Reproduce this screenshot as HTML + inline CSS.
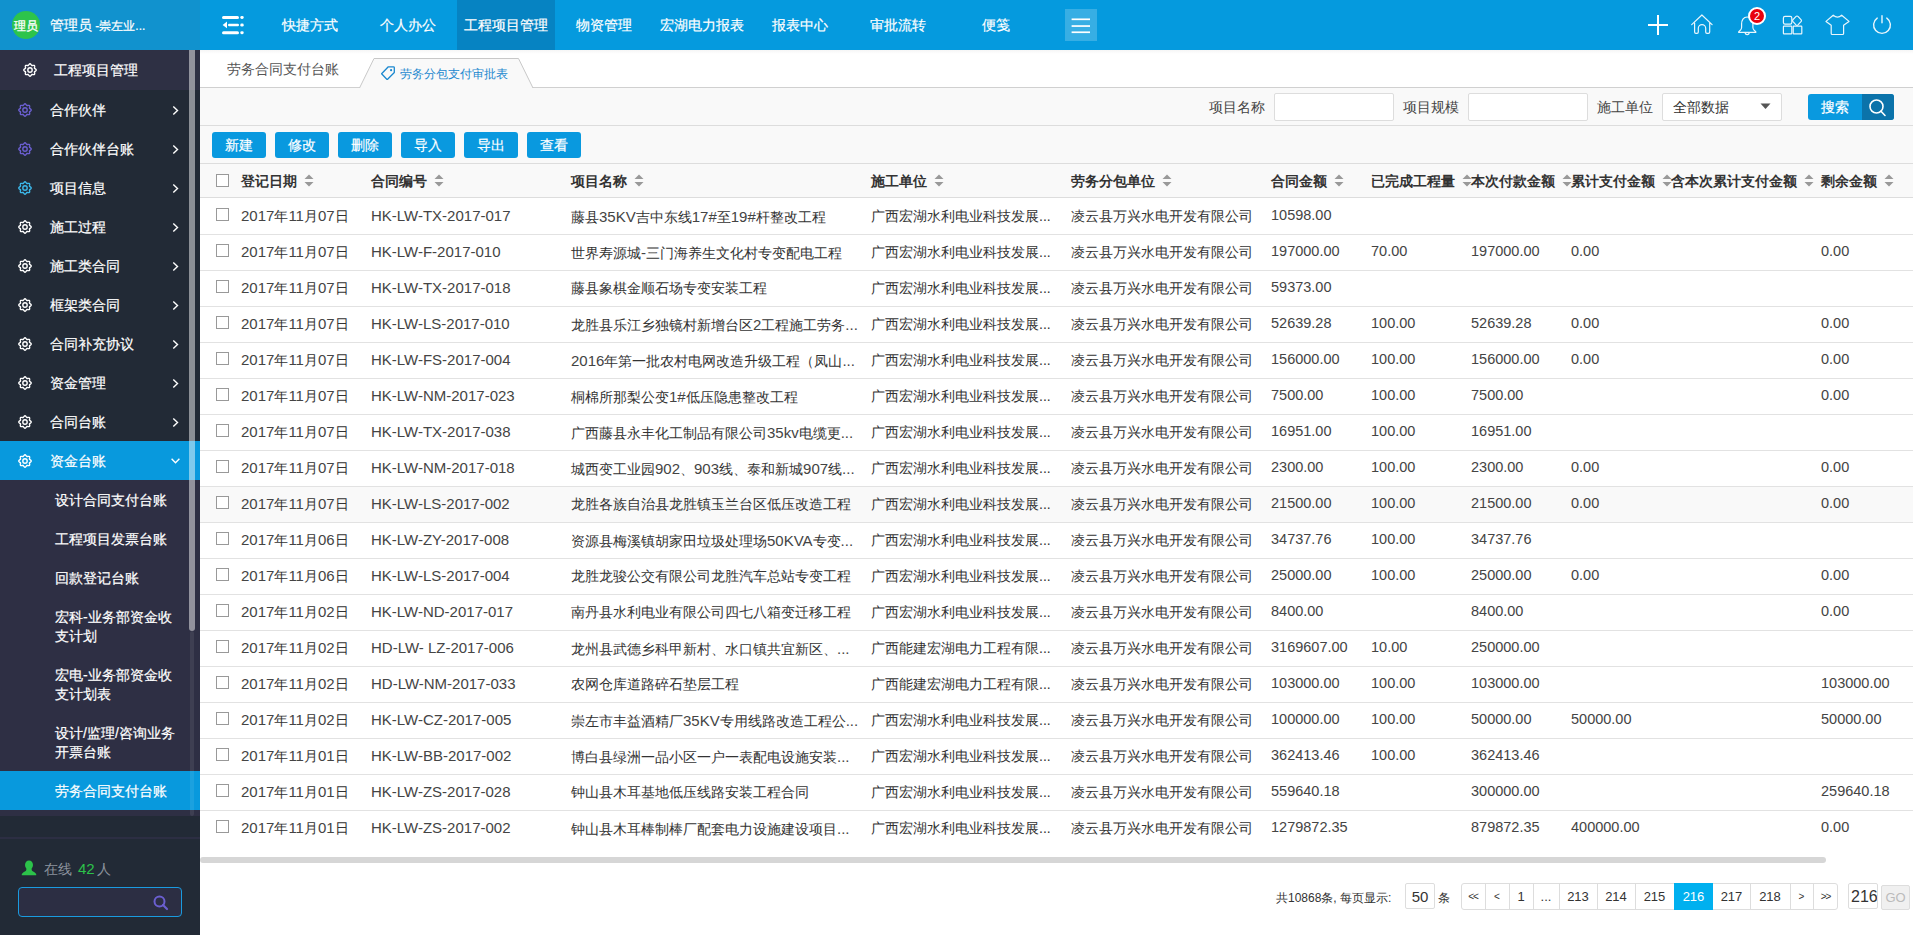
<!DOCTYPE html><html><head><meta charset="utf-8"><style>
.nav,.mi,.sub,.btn,.ws{-webkit-text-stroke:0.2px #fff}
*{box-sizing:border-box}
html,body{margin:0;padding:0}
body{width:1913px;height:935px;overflow:hidden;position:relative;font-family:"Liberation Sans",sans-serif;font-size:14px;color:#333;background:#fff}
.abs{position:absolute}
#hl{left:0;top:0;width:200px;height:50px;background:#1192ce}
#hn{left:200px;top:0;width:1713px;height:50px;background:#059ade}
.nav{position:absolute;top:0;height:50px;width:98px;line-height:50px;text-align:center;color:#fff;font-size:14px}
.nav.on{background:#0683c2}
#side{left:0;top:50px;width:200px;height:885px;background:#222a36}
.mi{position:absolute;left:0;width:200px;height:39px;line-height:39px;color:#fff;font-size:14px}
.mi .t{position:absolute;left:50px;top:1px}
.gear{position:absolute}
.chev{position:absolute;left:171px;top:16px;width:9px;height:9px}
.sub{position:absolute;left:0;width:200px;color:#fff;font-size:14px;line-height:19px}
.sub .t{position:absolute;left:55px}
.tr{position:absolute;left:200px;width:1713px;height:36px;border-bottom:1px solid #e2e2e2;background:#fff}
.c{position:absolute;top:0;line-height:33px;white-space:nowrap;color:#333}
.cb{position:absolute;left:16px;width:13px;height:13px;border:1px solid #999;background:#fff}
.l{font-size:15px;color:#444}
.n{font-size:14.5px;color:#444}
.btn{position:absolute;top:132px;width:54px;height:26px;border-radius:3px;background:#0999df;color:#fff;text-align:center;line-height:26px;font-size:14px}
.h{position:absolute;top:1px;line-height:34px;white-space:nowrap;font-weight:bold;color:#333}
.sort{display:inline-block;vertical-align:middle;margin-left:7px;width:10px;height:14px;position:relative;top:-1px}
.pgt{position:absolute;top:884px;height:25px;text-align:center;line-height:25px;font-size:13px;color:#333;white-space:nowrap}
</style></head><body>
<div id="hl" class="abs"></div>
<div class="abs" style="left:12px;top:11px;width:28px;height:28px;border-radius:50%;background:#2dc44b;color:#fff;font-size:12px;line-height:30px;text-align:center;letter-spacing:0;-webkit-text-stroke:0.3px #fff">理员</div>
<div class="abs ws" style="left:50px;top:0;line-height:50px;color:#fff;font-size:14px;white-space:nowrap">管理员<span style="font-size:12px"> -崇左业...</span></div>
<div id="hn" class="abs"></div>
<svg class="abs" style="left:221px;top:15px" width="24" height="20" viewBox="0 0 24 20"><rect x="1" y="1" width="17" height="3" rx="1.5" fill="#fff"/><rect x="19.3" y="1" width="3.4" height="3" rx="1.4" fill="#fff"/><path d="M1.6,9.9 L6,6.5 L6,13.3 Z" fill="#fff"/><rect x="7" y="8.8" width="11" height="2.5" rx="1.2" fill="#fff"/><rect x="19.3" y="8.6" width="3.4" height="3" rx="1.4" fill="#fff"/><rect x="1" y="16.2" width="17" height="3" rx="1.5" fill="#fff"/><rect x="19.3" y="16.2" width="3.4" height="3" rx="1.4" fill="#fff"/></svg>
<div class="nav" style="left:261px">快捷方式</div>
<div class="nav" style="left:359px">个人办公</div>
<div class="nav on" style="left:457px">工程项目管理</div>
<div class="nav" style="left:555px">物资管理</div>
<div class="nav" style="left:653px">宏湖电力报表</div>
<div class="nav" style="left:751px">报表中心</div>
<div class="nav" style="left:849px">审批流转</div>
<div class="nav" style="left:947px">便笺</div>
<div class="abs" style="left:1065px;top:9px;width:32px;height:32px;background:rgba(255,255,255,0.2)"></div>
<svg class="abs" style="left:1065px;top:9px" width="32" height="32"><rect x="6.6" y="9.45" width="18.4" height="1.7" fill="#fff"/><rect x="6.6" y="16.2" width="18.4" height="1.7" fill="#fff"/><rect x="6.6" y="22.4" width="18.4" height="1.7" fill="#fff"/></svg>
<svg class="abs" style="left:1646px;top:13px" width="24" height="24"><path d="M12,2 V22 M2,12 H22" stroke="#fff" stroke-width="2"/></svg>
<svg class="abs" style="left:1690px;top:13px" width="24" height="24"><path d="M1.7,11.6 L11.9,2 L22.1,11.6 M4.6,10 V19 Q4.6,20.4 6,20.4 H7 Q8.3,20.4 8.3,19 V15.3 A3.7,3.7 0 0 1 15.7,15.3 V19 Q15.7,20.4 17,20.4 H18.3 Q19.7,20.4 19.7,19 V10" fill="none" stroke="#eaf6fc" stroke-width="1.2" stroke-linejoin="round" stroke-linecap="round"/></svg>
<svg class="abs" style="left:1736px;top:13px" width="24" height="26"><path d="M11.2,4 C7.3,4 5.6,7.5 5.6,11 V14.6 Q5.6,16 4.3,17.3 L2.8,18.6 Q2.2,19.4 3.2,19.4 H19.3 Q20.3,19.4 19.7,18.6 L18.2,17.3 Q16.9,16 16.9,14.6 V11 C16.9,7.5 15.1,4 11.2,4 Z M9.2,19.6 A2,2 0 0 0 13.2,19.6" fill="none" stroke="#eaf6fc" stroke-width="1.2" stroke-linejoin="round" stroke-linecap="round"/></svg>
<div class="abs" style="left:1748px;top:7px;width:18px;height:18px;border-radius:50%;background:#e8000f;border:2px solid #fff;color:#fff;font-size:11px;line-height:14px;text-align:center">2</div>
<svg class="abs" style="left:1781px;top:13px" width="24" height="24"><rect x="2.4" y="3.4" width="8.4" height="7.8" rx="1.6" fill="none" stroke="#eaf6fc" stroke-width="1.2" stroke-linejoin="round" stroke-linecap="round"/><path d="M16,3 Q16.6,3 17.2,3.6 L20.2,6.8 Q20.8,7.6 20.2,8.4 L17,11.8 Q16,12.8 15,11.8 L11.8,8.4 Q11.2,7.6 11.8,6.8 L14.8,3.6 Q15.4,3 16,3 Z" fill="none" stroke="#eaf6fc" stroke-width="1.2" stroke-linejoin="round" stroke-linecap="round"/><rect x="2.4" y="13.2" width="8.4" height="7.6" rx="0.6" fill="none" stroke="#eaf6fc" stroke-width="1.2" stroke-linejoin="round" stroke-linecap="round"/><rect x="12.2" y="13.2" width="8.6" height="7.6" rx="0.6" fill="none" stroke="#eaf6fc" stroke-width="1.2" stroke-linejoin="round" stroke-linecap="round"/></svg>
<svg class="abs" style="left:1825px;top:13px" width="26" height="24"><path d="M8.2,2.2 Q12.5,6 16.7,2.2 L24,8.4 L18.6,12.2 V20.5 Q18.6,21.5 17.6,21.5 H7.2 Q6.2,21.5 6.2,20.5 V12.2 L1,8.4 Z" fill="none" stroke="#eaf6fc" stroke-width="1.2" stroke-linejoin="round" stroke-linecap="round"/></svg>
<svg class="abs" style="left:1870px;top:13px" width="24" height="24"><path d="M7.2,5.1 A8.4,8.4 0 1 0 16.8,5.1 M12,2.8 V9.8" fill="none" stroke="#eaf6fc" stroke-width="1.4" stroke-linecap="round"/></svg>
<div id="side" class="abs"></div>
<div class="abs" style="left:0;top:50px;width:200px;height:40px;background:#2e3044"></div>
<svg class="gear" style="left:22px;top:62px" width="16" height="16" viewBox="0 0 16 16"><path d="M8.00,1.80 L8.40,1.90 L8.77,2.18 L9.08,2.56 L9.35,2.95 L9.60,3.28 L9.88,3.47 L10.21,3.53 L10.61,3.48 L11.08,3.39 L11.58,3.34 L12.03,3.40 L12.38,3.62 L12.60,3.97 L12.66,4.42 L12.61,4.92 L12.52,5.39 L12.47,5.79 L12.53,6.12 L12.72,6.40 L13.05,6.65 L13.44,6.92 L13.82,7.23 L14.10,7.60 L14.20,8.00 L14.10,8.40 L13.82,8.77 L13.44,9.08 L13.05,9.35 L12.72,9.60 L12.53,9.88 L12.47,10.21 L12.52,10.61 L12.61,11.08 L12.66,11.58 L12.60,12.03 L12.38,12.38 L12.03,12.60 L11.58,12.66 L11.08,12.61 L10.61,12.52 L10.21,12.47 L9.88,12.53 L9.60,12.72 L9.35,13.05 L9.08,13.44 L8.77,13.82 L8.40,14.10 L8.00,14.20 L7.60,14.10 L7.23,13.82 L6.92,13.44 L6.65,13.05 L6.40,12.72 L6.12,12.53 L5.79,12.47 L5.39,12.52 L4.92,12.61 L4.42,12.66 L3.97,12.60 L3.62,12.38 L3.40,12.03 L3.34,11.58 L3.39,11.08 L3.48,10.61 L3.53,10.21 L3.47,9.88 L3.28,9.60 L2.95,9.35 L2.56,9.08 L2.18,8.77 L1.90,8.40 L1.80,8.00 L1.90,7.60 L2.18,7.23 L2.56,6.92 L2.95,6.65 L3.28,6.40 L3.47,6.12 L3.53,5.79 L3.48,5.39 L3.39,4.92 L3.34,4.42 L3.40,3.97 L3.62,3.62 L3.97,3.40 L4.42,3.34 L4.92,3.39 L5.39,3.48 L5.79,3.53 L6.12,3.47 L6.40,3.28 L6.65,2.95 L6.92,2.56 L7.23,2.18 L7.60,1.90Z" fill="none" stroke="#fff" stroke-width="1.4"/><circle cx="8" cy="8" r="2.2" fill="none" stroke="#fff" stroke-width="1.4"/></svg>
<div class="abs ws" style="left:54px;top:50px;line-height:40px;color:#fff;font-size:14px">工程项目管理</div>
<div class="mi" style="top:90px"><svg class="gear" style="left:17px;top:12px" width="16" height="16" viewBox="0 0 16 16"><path d="M8.00,1.80 L8.40,1.90 L8.77,2.18 L9.08,2.56 L9.35,2.95 L9.60,3.28 L9.88,3.47 L10.21,3.53 L10.61,3.48 L11.08,3.39 L11.58,3.34 L12.03,3.40 L12.38,3.62 L12.60,3.97 L12.66,4.42 L12.61,4.92 L12.52,5.39 L12.47,5.79 L12.53,6.12 L12.72,6.40 L13.05,6.65 L13.44,6.92 L13.82,7.23 L14.10,7.60 L14.20,8.00 L14.10,8.40 L13.82,8.77 L13.44,9.08 L13.05,9.35 L12.72,9.60 L12.53,9.88 L12.47,10.21 L12.52,10.61 L12.61,11.08 L12.66,11.58 L12.60,12.03 L12.38,12.38 L12.03,12.60 L11.58,12.66 L11.08,12.61 L10.61,12.52 L10.21,12.47 L9.88,12.53 L9.60,12.72 L9.35,13.05 L9.08,13.44 L8.77,13.82 L8.40,14.10 L8.00,14.20 L7.60,14.10 L7.23,13.82 L6.92,13.44 L6.65,13.05 L6.40,12.72 L6.12,12.53 L5.79,12.47 L5.39,12.52 L4.92,12.61 L4.42,12.66 L3.97,12.60 L3.62,12.38 L3.40,12.03 L3.34,11.58 L3.39,11.08 L3.48,10.61 L3.53,10.21 L3.47,9.88 L3.28,9.60 L2.95,9.35 L2.56,9.08 L2.18,8.77 L1.90,8.40 L1.80,8.00 L1.90,7.60 L2.18,7.23 L2.56,6.92 L2.95,6.65 L3.28,6.40 L3.47,6.12 L3.53,5.79 L3.48,5.39 L3.39,4.92 L3.34,4.42 L3.40,3.97 L3.62,3.62 L3.97,3.40 L4.42,3.34 L4.92,3.39 L5.39,3.48 L5.79,3.53 L6.12,3.47 L6.40,3.28 L6.65,2.95 L6.92,2.56 L7.23,2.18 L7.60,1.90Z" fill="none" stroke="#6b5fd0" stroke-width="1.4"/><circle cx="8" cy="8" r="2.2" fill="none" stroke="#6b5fd0" stroke-width="1.4"/></svg><span class="t">合作伙伴</span><svg class="chev" viewBox="0 0 9 9"><path d="M2.3,0.6 L6.5,4.5 L2.3,8.4" fill="none" stroke="#fff" stroke-width="1.4"/></svg></div>
<div class="mi" style="top:129px"><svg class="gear" style="left:17px;top:12px" width="16" height="16" viewBox="0 0 16 16"><path d="M8.00,1.80 L8.40,1.90 L8.77,2.18 L9.08,2.56 L9.35,2.95 L9.60,3.28 L9.88,3.47 L10.21,3.53 L10.61,3.48 L11.08,3.39 L11.58,3.34 L12.03,3.40 L12.38,3.62 L12.60,3.97 L12.66,4.42 L12.61,4.92 L12.52,5.39 L12.47,5.79 L12.53,6.12 L12.72,6.40 L13.05,6.65 L13.44,6.92 L13.82,7.23 L14.10,7.60 L14.20,8.00 L14.10,8.40 L13.82,8.77 L13.44,9.08 L13.05,9.35 L12.72,9.60 L12.53,9.88 L12.47,10.21 L12.52,10.61 L12.61,11.08 L12.66,11.58 L12.60,12.03 L12.38,12.38 L12.03,12.60 L11.58,12.66 L11.08,12.61 L10.61,12.52 L10.21,12.47 L9.88,12.53 L9.60,12.72 L9.35,13.05 L9.08,13.44 L8.77,13.82 L8.40,14.10 L8.00,14.20 L7.60,14.10 L7.23,13.82 L6.92,13.44 L6.65,13.05 L6.40,12.72 L6.12,12.53 L5.79,12.47 L5.39,12.52 L4.92,12.61 L4.42,12.66 L3.97,12.60 L3.62,12.38 L3.40,12.03 L3.34,11.58 L3.39,11.08 L3.48,10.61 L3.53,10.21 L3.47,9.88 L3.28,9.60 L2.95,9.35 L2.56,9.08 L2.18,8.77 L1.90,8.40 L1.80,8.00 L1.90,7.60 L2.18,7.23 L2.56,6.92 L2.95,6.65 L3.28,6.40 L3.47,6.12 L3.53,5.79 L3.48,5.39 L3.39,4.92 L3.34,4.42 L3.40,3.97 L3.62,3.62 L3.97,3.40 L4.42,3.34 L4.92,3.39 L5.39,3.48 L5.79,3.53 L6.12,3.47 L6.40,3.28 L6.65,2.95 L6.92,2.56 L7.23,2.18 L7.60,1.90Z" fill="none" stroke="#6b5fd0" stroke-width="1.4"/><circle cx="8" cy="8" r="2.2" fill="none" stroke="#6b5fd0" stroke-width="1.4"/></svg><span class="t">合作伙伴台账</span><svg class="chev" viewBox="0 0 9 9"><path d="M2.3,0.6 L6.5,4.5 L2.3,8.4" fill="none" stroke="#fff" stroke-width="1.4"/></svg></div>
<div class="mi" style="top:168px"><svg class="gear" style="left:17px;top:12px" width="16" height="16" viewBox="0 0 16 16"><path d="M8.00,1.80 L8.40,1.90 L8.77,2.18 L9.08,2.56 L9.35,2.95 L9.60,3.28 L9.88,3.47 L10.21,3.53 L10.61,3.48 L11.08,3.39 L11.58,3.34 L12.03,3.40 L12.38,3.62 L12.60,3.97 L12.66,4.42 L12.61,4.92 L12.52,5.39 L12.47,5.79 L12.53,6.12 L12.72,6.40 L13.05,6.65 L13.44,6.92 L13.82,7.23 L14.10,7.60 L14.20,8.00 L14.10,8.40 L13.82,8.77 L13.44,9.08 L13.05,9.35 L12.72,9.60 L12.53,9.88 L12.47,10.21 L12.52,10.61 L12.61,11.08 L12.66,11.58 L12.60,12.03 L12.38,12.38 L12.03,12.60 L11.58,12.66 L11.08,12.61 L10.61,12.52 L10.21,12.47 L9.88,12.53 L9.60,12.72 L9.35,13.05 L9.08,13.44 L8.77,13.82 L8.40,14.10 L8.00,14.20 L7.60,14.10 L7.23,13.82 L6.92,13.44 L6.65,13.05 L6.40,12.72 L6.12,12.53 L5.79,12.47 L5.39,12.52 L4.92,12.61 L4.42,12.66 L3.97,12.60 L3.62,12.38 L3.40,12.03 L3.34,11.58 L3.39,11.08 L3.48,10.61 L3.53,10.21 L3.47,9.88 L3.28,9.60 L2.95,9.35 L2.56,9.08 L2.18,8.77 L1.90,8.40 L1.80,8.00 L1.90,7.60 L2.18,7.23 L2.56,6.92 L2.95,6.65 L3.28,6.40 L3.47,6.12 L3.53,5.79 L3.48,5.39 L3.39,4.92 L3.34,4.42 L3.40,3.97 L3.62,3.62 L3.97,3.40 L4.42,3.34 L4.92,3.39 L5.39,3.48 L5.79,3.53 L6.12,3.47 L6.40,3.28 L6.65,2.95 L6.92,2.56 L7.23,2.18 L7.60,1.90Z" fill="none" stroke="#3cb8ea" stroke-width="1.4"/><circle cx="8" cy="8" r="2.2" fill="none" stroke="#3cb8ea" stroke-width="1.4"/></svg><span class="t">项目信息</span><svg class="chev" viewBox="0 0 9 9"><path d="M2.3,0.6 L6.5,4.5 L2.3,8.4" fill="none" stroke="#fff" stroke-width="1.4"/></svg></div>
<div class="mi" style="top:207px"><svg class="gear" style="left:17px;top:12px" width="16" height="16" viewBox="0 0 16 16"><path d="M8.00,1.80 L8.40,1.90 L8.77,2.18 L9.08,2.56 L9.35,2.95 L9.60,3.28 L9.88,3.47 L10.21,3.53 L10.61,3.48 L11.08,3.39 L11.58,3.34 L12.03,3.40 L12.38,3.62 L12.60,3.97 L12.66,4.42 L12.61,4.92 L12.52,5.39 L12.47,5.79 L12.53,6.12 L12.72,6.40 L13.05,6.65 L13.44,6.92 L13.82,7.23 L14.10,7.60 L14.20,8.00 L14.10,8.40 L13.82,8.77 L13.44,9.08 L13.05,9.35 L12.72,9.60 L12.53,9.88 L12.47,10.21 L12.52,10.61 L12.61,11.08 L12.66,11.58 L12.60,12.03 L12.38,12.38 L12.03,12.60 L11.58,12.66 L11.08,12.61 L10.61,12.52 L10.21,12.47 L9.88,12.53 L9.60,12.72 L9.35,13.05 L9.08,13.44 L8.77,13.82 L8.40,14.10 L8.00,14.20 L7.60,14.10 L7.23,13.82 L6.92,13.44 L6.65,13.05 L6.40,12.72 L6.12,12.53 L5.79,12.47 L5.39,12.52 L4.92,12.61 L4.42,12.66 L3.97,12.60 L3.62,12.38 L3.40,12.03 L3.34,11.58 L3.39,11.08 L3.48,10.61 L3.53,10.21 L3.47,9.88 L3.28,9.60 L2.95,9.35 L2.56,9.08 L2.18,8.77 L1.90,8.40 L1.80,8.00 L1.90,7.60 L2.18,7.23 L2.56,6.92 L2.95,6.65 L3.28,6.40 L3.47,6.12 L3.53,5.79 L3.48,5.39 L3.39,4.92 L3.34,4.42 L3.40,3.97 L3.62,3.62 L3.97,3.40 L4.42,3.34 L4.92,3.39 L5.39,3.48 L5.79,3.53 L6.12,3.47 L6.40,3.28 L6.65,2.95 L6.92,2.56 L7.23,2.18 L7.60,1.90Z" fill="none" stroke="#fff" stroke-width="1.4"/><circle cx="8" cy="8" r="2.2" fill="none" stroke="#fff" stroke-width="1.4"/></svg><span class="t">施工过程</span><svg class="chev" viewBox="0 0 9 9"><path d="M2.3,0.6 L6.5,4.5 L2.3,8.4" fill="none" stroke="#fff" stroke-width="1.4"/></svg></div>
<div class="mi" style="top:246px"><svg class="gear" style="left:17px;top:12px" width="16" height="16" viewBox="0 0 16 16"><path d="M8.00,1.80 L8.40,1.90 L8.77,2.18 L9.08,2.56 L9.35,2.95 L9.60,3.28 L9.88,3.47 L10.21,3.53 L10.61,3.48 L11.08,3.39 L11.58,3.34 L12.03,3.40 L12.38,3.62 L12.60,3.97 L12.66,4.42 L12.61,4.92 L12.52,5.39 L12.47,5.79 L12.53,6.12 L12.72,6.40 L13.05,6.65 L13.44,6.92 L13.82,7.23 L14.10,7.60 L14.20,8.00 L14.10,8.40 L13.82,8.77 L13.44,9.08 L13.05,9.35 L12.72,9.60 L12.53,9.88 L12.47,10.21 L12.52,10.61 L12.61,11.08 L12.66,11.58 L12.60,12.03 L12.38,12.38 L12.03,12.60 L11.58,12.66 L11.08,12.61 L10.61,12.52 L10.21,12.47 L9.88,12.53 L9.60,12.72 L9.35,13.05 L9.08,13.44 L8.77,13.82 L8.40,14.10 L8.00,14.20 L7.60,14.10 L7.23,13.82 L6.92,13.44 L6.65,13.05 L6.40,12.72 L6.12,12.53 L5.79,12.47 L5.39,12.52 L4.92,12.61 L4.42,12.66 L3.97,12.60 L3.62,12.38 L3.40,12.03 L3.34,11.58 L3.39,11.08 L3.48,10.61 L3.53,10.21 L3.47,9.88 L3.28,9.60 L2.95,9.35 L2.56,9.08 L2.18,8.77 L1.90,8.40 L1.80,8.00 L1.90,7.60 L2.18,7.23 L2.56,6.92 L2.95,6.65 L3.28,6.40 L3.47,6.12 L3.53,5.79 L3.48,5.39 L3.39,4.92 L3.34,4.42 L3.40,3.97 L3.62,3.62 L3.97,3.40 L4.42,3.34 L4.92,3.39 L5.39,3.48 L5.79,3.53 L6.12,3.47 L6.40,3.28 L6.65,2.95 L6.92,2.56 L7.23,2.18 L7.60,1.90Z" fill="none" stroke="#fff" stroke-width="1.4"/><circle cx="8" cy="8" r="2.2" fill="none" stroke="#fff" stroke-width="1.4"/></svg><span class="t">施工类合同</span><svg class="chev" viewBox="0 0 9 9"><path d="M2.3,0.6 L6.5,4.5 L2.3,8.4" fill="none" stroke="#fff" stroke-width="1.4"/></svg></div>
<div class="mi" style="top:285px"><svg class="gear" style="left:17px;top:12px" width="16" height="16" viewBox="0 0 16 16"><path d="M8.00,1.80 L8.40,1.90 L8.77,2.18 L9.08,2.56 L9.35,2.95 L9.60,3.28 L9.88,3.47 L10.21,3.53 L10.61,3.48 L11.08,3.39 L11.58,3.34 L12.03,3.40 L12.38,3.62 L12.60,3.97 L12.66,4.42 L12.61,4.92 L12.52,5.39 L12.47,5.79 L12.53,6.12 L12.72,6.40 L13.05,6.65 L13.44,6.92 L13.82,7.23 L14.10,7.60 L14.20,8.00 L14.10,8.40 L13.82,8.77 L13.44,9.08 L13.05,9.35 L12.72,9.60 L12.53,9.88 L12.47,10.21 L12.52,10.61 L12.61,11.08 L12.66,11.58 L12.60,12.03 L12.38,12.38 L12.03,12.60 L11.58,12.66 L11.08,12.61 L10.61,12.52 L10.21,12.47 L9.88,12.53 L9.60,12.72 L9.35,13.05 L9.08,13.44 L8.77,13.82 L8.40,14.10 L8.00,14.20 L7.60,14.10 L7.23,13.82 L6.92,13.44 L6.65,13.05 L6.40,12.72 L6.12,12.53 L5.79,12.47 L5.39,12.52 L4.92,12.61 L4.42,12.66 L3.97,12.60 L3.62,12.38 L3.40,12.03 L3.34,11.58 L3.39,11.08 L3.48,10.61 L3.53,10.21 L3.47,9.88 L3.28,9.60 L2.95,9.35 L2.56,9.08 L2.18,8.77 L1.90,8.40 L1.80,8.00 L1.90,7.60 L2.18,7.23 L2.56,6.92 L2.95,6.65 L3.28,6.40 L3.47,6.12 L3.53,5.79 L3.48,5.39 L3.39,4.92 L3.34,4.42 L3.40,3.97 L3.62,3.62 L3.97,3.40 L4.42,3.34 L4.92,3.39 L5.39,3.48 L5.79,3.53 L6.12,3.47 L6.40,3.28 L6.65,2.95 L6.92,2.56 L7.23,2.18 L7.60,1.90Z" fill="none" stroke="#fff" stroke-width="1.4"/><circle cx="8" cy="8" r="2.2" fill="none" stroke="#fff" stroke-width="1.4"/></svg><span class="t">框架类合同</span><svg class="chev" viewBox="0 0 9 9"><path d="M2.3,0.6 L6.5,4.5 L2.3,8.4" fill="none" stroke="#fff" stroke-width="1.4"/></svg></div>
<div class="mi" style="top:324px"><svg class="gear" style="left:17px;top:12px" width="16" height="16" viewBox="0 0 16 16"><path d="M8.00,1.80 L8.40,1.90 L8.77,2.18 L9.08,2.56 L9.35,2.95 L9.60,3.28 L9.88,3.47 L10.21,3.53 L10.61,3.48 L11.08,3.39 L11.58,3.34 L12.03,3.40 L12.38,3.62 L12.60,3.97 L12.66,4.42 L12.61,4.92 L12.52,5.39 L12.47,5.79 L12.53,6.12 L12.72,6.40 L13.05,6.65 L13.44,6.92 L13.82,7.23 L14.10,7.60 L14.20,8.00 L14.10,8.40 L13.82,8.77 L13.44,9.08 L13.05,9.35 L12.72,9.60 L12.53,9.88 L12.47,10.21 L12.52,10.61 L12.61,11.08 L12.66,11.58 L12.60,12.03 L12.38,12.38 L12.03,12.60 L11.58,12.66 L11.08,12.61 L10.61,12.52 L10.21,12.47 L9.88,12.53 L9.60,12.72 L9.35,13.05 L9.08,13.44 L8.77,13.82 L8.40,14.10 L8.00,14.20 L7.60,14.10 L7.23,13.82 L6.92,13.44 L6.65,13.05 L6.40,12.72 L6.12,12.53 L5.79,12.47 L5.39,12.52 L4.92,12.61 L4.42,12.66 L3.97,12.60 L3.62,12.38 L3.40,12.03 L3.34,11.58 L3.39,11.08 L3.48,10.61 L3.53,10.21 L3.47,9.88 L3.28,9.60 L2.95,9.35 L2.56,9.08 L2.18,8.77 L1.90,8.40 L1.80,8.00 L1.90,7.60 L2.18,7.23 L2.56,6.92 L2.95,6.65 L3.28,6.40 L3.47,6.12 L3.53,5.79 L3.48,5.39 L3.39,4.92 L3.34,4.42 L3.40,3.97 L3.62,3.62 L3.97,3.40 L4.42,3.34 L4.92,3.39 L5.39,3.48 L5.79,3.53 L6.12,3.47 L6.40,3.28 L6.65,2.95 L6.92,2.56 L7.23,2.18 L7.60,1.90Z" fill="none" stroke="#fff" stroke-width="1.4"/><circle cx="8" cy="8" r="2.2" fill="none" stroke="#fff" stroke-width="1.4"/></svg><span class="t">合同补充协议</span><svg class="chev" viewBox="0 0 9 9"><path d="M2.3,0.6 L6.5,4.5 L2.3,8.4" fill="none" stroke="#fff" stroke-width="1.4"/></svg></div>
<div class="mi" style="top:363px"><svg class="gear" style="left:17px;top:12px" width="16" height="16" viewBox="0 0 16 16"><path d="M8.00,1.80 L8.40,1.90 L8.77,2.18 L9.08,2.56 L9.35,2.95 L9.60,3.28 L9.88,3.47 L10.21,3.53 L10.61,3.48 L11.08,3.39 L11.58,3.34 L12.03,3.40 L12.38,3.62 L12.60,3.97 L12.66,4.42 L12.61,4.92 L12.52,5.39 L12.47,5.79 L12.53,6.12 L12.72,6.40 L13.05,6.65 L13.44,6.92 L13.82,7.23 L14.10,7.60 L14.20,8.00 L14.10,8.40 L13.82,8.77 L13.44,9.08 L13.05,9.35 L12.72,9.60 L12.53,9.88 L12.47,10.21 L12.52,10.61 L12.61,11.08 L12.66,11.58 L12.60,12.03 L12.38,12.38 L12.03,12.60 L11.58,12.66 L11.08,12.61 L10.61,12.52 L10.21,12.47 L9.88,12.53 L9.60,12.72 L9.35,13.05 L9.08,13.44 L8.77,13.82 L8.40,14.10 L8.00,14.20 L7.60,14.10 L7.23,13.82 L6.92,13.44 L6.65,13.05 L6.40,12.72 L6.12,12.53 L5.79,12.47 L5.39,12.52 L4.92,12.61 L4.42,12.66 L3.97,12.60 L3.62,12.38 L3.40,12.03 L3.34,11.58 L3.39,11.08 L3.48,10.61 L3.53,10.21 L3.47,9.88 L3.28,9.60 L2.95,9.35 L2.56,9.08 L2.18,8.77 L1.90,8.40 L1.80,8.00 L1.90,7.60 L2.18,7.23 L2.56,6.92 L2.95,6.65 L3.28,6.40 L3.47,6.12 L3.53,5.79 L3.48,5.39 L3.39,4.92 L3.34,4.42 L3.40,3.97 L3.62,3.62 L3.97,3.40 L4.42,3.34 L4.92,3.39 L5.39,3.48 L5.79,3.53 L6.12,3.47 L6.40,3.28 L6.65,2.95 L6.92,2.56 L7.23,2.18 L7.60,1.90Z" fill="none" stroke="#fff" stroke-width="1.4"/><circle cx="8" cy="8" r="2.2" fill="none" stroke="#fff" stroke-width="1.4"/></svg><span class="t">资金管理</span><svg class="chev" viewBox="0 0 9 9"><path d="M2.3,0.6 L6.5,4.5 L2.3,8.4" fill="none" stroke="#fff" stroke-width="1.4"/></svg></div>
<div class="mi" style="top:402px"><svg class="gear" style="left:17px;top:12px" width="16" height="16" viewBox="0 0 16 16"><path d="M8.00,1.80 L8.40,1.90 L8.77,2.18 L9.08,2.56 L9.35,2.95 L9.60,3.28 L9.88,3.47 L10.21,3.53 L10.61,3.48 L11.08,3.39 L11.58,3.34 L12.03,3.40 L12.38,3.62 L12.60,3.97 L12.66,4.42 L12.61,4.92 L12.52,5.39 L12.47,5.79 L12.53,6.12 L12.72,6.40 L13.05,6.65 L13.44,6.92 L13.82,7.23 L14.10,7.60 L14.20,8.00 L14.10,8.40 L13.82,8.77 L13.44,9.08 L13.05,9.35 L12.72,9.60 L12.53,9.88 L12.47,10.21 L12.52,10.61 L12.61,11.08 L12.66,11.58 L12.60,12.03 L12.38,12.38 L12.03,12.60 L11.58,12.66 L11.08,12.61 L10.61,12.52 L10.21,12.47 L9.88,12.53 L9.60,12.72 L9.35,13.05 L9.08,13.44 L8.77,13.82 L8.40,14.10 L8.00,14.20 L7.60,14.10 L7.23,13.82 L6.92,13.44 L6.65,13.05 L6.40,12.72 L6.12,12.53 L5.79,12.47 L5.39,12.52 L4.92,12.61 L4.42,12.66 L3.97,12.60 L3.62,12.38 L3.40,12.03 L3.34,11.58 L3.39,11.08 L3.48,10.61 L3.53,10.21 L3.47,9.88 L3.28,9.60 L2.95,9.35 L2.56,9.08 L2.18,8.77 L1.90,8.40 L1.80,8.00 L1.90,7.60 L2.18,7.23 L2.56,6.92 L2.95,6.65 L3.28,6.40 L3.47,6.12 L3.53,5.79 L3.48,5.39 L3.39,4.92 L3.34,4.42 L3.40,3.97 L3.62,3.62 L3.97,3.40 L4.42,3.34 L4.92,3.39 L5.39,3.48 L5.79,3.53 L6.12,3.47 L6.40,3.28 L6.65,2.95 L6.92,2.56 L7.23,2.18 L7.60,1.90Z" fill="none" stroke="#fff" stroke-width="1.4"/><circle cx="8" cy="8" r="2.2" fill="none" stroke="#fff" stroke-width="1.4"/></svg><span class="t">合同台账</span><svg class="chev" viewBox="0 0 9 9"><path d="M2.3,0.6 L6.5,4.5 L2.3,8.4" fill="none" stroke="#fff" stroke-width="1.4"/></svg></div>
<div class="mi" style="top:441px;background:#0899dd"><svg class="gear" style="left:17px;top:12px" width="16" height="16" viewBox="0 0 16 16"><path d="M8.00,1.80 L8.40,1.90 L8.77,2.18 L9.08,2.56 L9.35,2.95 L9.60,3.28 L9.88,3.47 L10.21,3.53 L10.61,3.48 L11.08,3.39 L11.58,3.34 L12.03,3.40 L12.38,3.62 L12.60,3.97 L12.66,4.42 L12.61,4.92 L12.52,5.39 L12.47,5.79 L12.53,6.12 L12.72,6.40 L13.05,6.65 L13.44,6.92 L13.82,7.23 L14.10,7.60 L14.20,8.00 L14.10,8.40 L13.82,8.77 L13.44,9.08 L13.05,9.35 L12.72,9.60 L12.53,9.88 L12.47,10.21 L12.52,10.61 L12.61,11.08 L12.66,11.58 L12.60,12.03 L12.38,12.38 L12.03,12.60 L11.58,12.66 L11.08,12.61 L10.61,12.52 L10.21,12.47 L9.88,12.53 L9.60,12.72 L9.35,13.05 L9.08,13.44 L8.77,13.82 L8.40,14.10 L8.00,14.20 L7.60,14.10 L7.23,13.82 L6.92,13.44 L6.65,13.05 L6.40,12.72 L6.12,12.53 L5.79,12.47 L5.39,12.52 L4.92,12.61 L4.42,12.66 L3.97,12.60 L3.62,12.38 L3.40,12.03 L3.34,11.58 L3.39,11.08 L3.48,10.61 L3.53,10.21 L3.47,9.88 L3.28,9.60 L2.95,9.35 L2.56,9.08 L2.18,8.77 L1.90,8.40 L1.80,8.00 L1.90,7.60 L2.18,7.23 L2.56,6.92 L2.95,6.65 L3.28,6.40 L3.47,6.12 L3.53,5.79 L3.48,5.39 L3.39,4.92 L3.34,4.42 L3.40,3.97 L3.62,3.62 L3.97,3.40 L4.42,3.34 L4.92,3.39 L5.39,3.48 L5.79,3.53 L6.12,3.47 L6.40,3.28 L6.65,2.95 L6.92,2.56 L7.23,2.18 L7.60,1.90Z" fill="none" stroke="#fff" stroke-width="1.4"/><circle cx="8" cy="8" r="2.2" fill="none" stroke="#fff" stroke-width="1.4"/></svg><span class="t">资金台账</span><svg class="chev" viewBox="0 0 9 9"><path d="M0.6,1.8 L4.5,5.8 L8.4,1.8" fill="none" stroke="#fff" stroke-width="1.4"/></svg></div>
<div class="abs" style="left:0;top:480px;width:200px;height:336px;background:#2e2f44"></div>
<div class="sub" style="top:480px;height:39px;"><span class="t" style="top:11px">设计合同支付台账</span></div>
<div class="sub" style="top:519px;height:39px;"><span class="t" style="top:11px">工程项目发票台账</span></div>
<div class="sub" style="top:558px;height:39px;"><span class="t" style="top:11px">回款登记台账</span></div>
<div class="sub" style="top:597px;height:58px;"><span class="t" style="top:11px">宏科-业务部资金收<br>支计划</span></div>
<div class="sub" style="top:655px;height:58px;"><span class="t" style="top:11px">宏电-业务部资金收<br>支计划表</span></div>
<div class="sub" style="top:713px;height:58px;"><span class="t" style="top:11px">设计/监理/咨询业务<br>开票台账</span></div>
<div class="sub" style="top:771px;height:39px;background:#0899dd;"><span class="t" style="top:11px">劳务合同支付台账</span></div>
<div class="abs" style="left:190px;top:631px;width:4px;height:185px;background:rgba(255,255,255,0.08);border-radius:2px"></div>
<div class="abs" style="left:189px;top:50px;width:6px;height:581px;background:rgba(255,255,255,0.48);border-radius:0 0 3px 3px"></div>
<div class="abs" style="left:0;top:837px;width:200px;height:2px;background:#2c2e43"></div>
<svg class="abs" style="left:21px;top:860px" width="16" height="16" viewBox="0 0 16 16"><ellipse cx="8" cy="5" rx="4" ry="4.5" fill="#2cc24a"/><path d="M0.8,15.2 V14 Q1.5,12.6 5,10.8 L5.6,8.5 H10.4 L11,10.8 Q14.5,12.6 15.2,14 V15.2 Z" fill="#2cc24a"/></svg>
<div class="abs" style="left:44px;top:859px;line-height:20px;font-size:14px;color:#8b929c;white-space:nowrap">在线</div>
<div class="abs" style="left:78px;top:859px;line-height:20px;font-size:15px;color:#2cc24a;white-space:nowrap">42</div>
<div class="abs" style="left:97px;top:859px;line-height:20px;font-size:14px;color:#8b929c;white-space:nowrap">人</div>
<div class="abs" style="left:18px;top:887px;width:164px;height:30px;border:1px solid #1a9be0;border-radius:4px;background:#2c2e43"></div>
<svg class="abs" style="left:152px;top:894px" width="18" height="18" viewBox="0 0 18 18"><circle cx="7.5" cy="7.5" r="5" fill="none" stroke="#6b5fd0" stroke-width="2"/><path d="M11,11 L15,15" stroke="#6b5fd0" stroke-width="2.2" stroke-linecap="round"/></svg>
<div class="abs" style="left:200px;top:50px;width:1713px;height:38px;background:#fff"></div>
<div class="abs" style="left:200px;top:87px;width:1713px;height:1px;background:#d0d0d0"></div>
<div class="abs" style="left:200px;top:50px;width:1713px;height:4px;background:linear-gradient(rgba(0,0,0,0.04),rgba(0,0,0,0))"></div>
<div class="abs" style="left:227px;top:58px;line-height:22px;font-size:14px;color:#555;white-space:nowrap">劳务合同支付台账</div>
<svg class="abs" style="left:359px;top:57px" width="176" height="32"><path d="M0.5,31 L15,1.5 L159.5,1.5 L174,31" fill="#f9f9f9" stroke="#c8c8c8" stroke-width="1"/></svg>
<svg class="abs" style="left:380px;top:65px" width="16" height="16" viewBox="0 0 16 16"><path d="M1.6,8.8 L8.3,1.8 H13.5 Q14.3,1.8 14.3,2.6 V7.5 L7.6,14.2 Q7.2,14.6 6.8,14.2 Z" fill="none" stroke="#1b88cf" stroke-width="1.3" stroke-linejoin="round"/><circle cx="11.1" cy="5.2" r="1.1" fill="#1b88cf"/></svg>
<div class="abs" style="left:400px;top:64px;line-height:20px;font-size:12px;color:#1b88cf;white-space:nowrap">劳务分包支付审批表</div>
<div class="abs" style="left:200px;top:88px;width:1713px;height:76px;background:#f9f9f9"></div>
<div class="abs" style="left:200px;top:125px;width:1713px;height:1px;background:#ddd"></div>
<div class="abs" style="left:200px;top:163px;width:1713px;height:1px;background:#ddd"></div>
<div class="abs" style="left:1209px;top:96px;line-height:22px;font-size:14px;color:#444">项目名称</div>
<div class="abs" style="left:1403px;top:96px;line-height:22px;font-size:14px;color:#444">项目规模</div>
<div class="abs" style="left:1597px;top:96px;line-height:22px;font-size:14px;color:#444">施工单位</div>
<div class="abs" style="left:1274px;top:93px;width:120px;height:28px;border:1px solid #ddd;border-radius:2px;background:#fff"></div>
<div class="abs" style="left:1468px;top:93px;width:120px;height:28px;border:1px solid #ddd;border-radius:2px;background:#fff"></div>
<div class="abs" style="left:1662px;top:93px;width:120px;height:28px;border:1px solid #ddd;border-radius:2px;background:#fff"></div>
<div class="abs" style="left:1673px;top:96px;line-height:22px;font-size:14px;color:#333">全部数据</div>
<svg class="abs" style="left:1760px;top:103px" width="11" height="7"><path d="M0.5,0.5 H10.5 L5.5,6 Z" fill="#555"/></svg>
<div class="abs" style="left:1808px;top:94px;width:86px;height:26px;border-radius:3px;background:#0999df;overflow:hidden"><div class="abs" style="left:54px;top:0;width:32px;height:26px;background:#0b73aa"></div></div>
<div class="abs ws" style="left:1821px;top:96px;line-height:22px;font-size:14px;color:#fff">搜索</div>
<svg class="abs" style="left:1866px;top:97px" width="22" height="22" viewBox="0 0 22 22"><circle cx="10.5" cy="9.5" r="6.5" fill="none" stroke="#fff" stroke-width="1.6"/><path d="M15,14.2 L19,18.5" stroke="#fff" stroke-width="1.6" stroke-linecap="round"/></svg>
<div class="btn" style="left:212px">新建</div>
<div class="btn" style="left:275px">修改</div>
<div class="btn" style="left:338px">删除</div>
<div class="btn" style="left:401px">导入</div>
<div class="btn" style="left:464px">导出</div>
<div class="btn" style="left:527px">查看</div>
<div class="abs" style="left:200px;top:164px;width:1713px;height:34px;background:#f9f9f9;border-bottom:1px solid #ddd"></div>
<div class="cb" style="top:174px;left:216px"></div>
<div class="h" style="left:241px;top:164px">登记日期<svg class="sort" viewBox="0 0 10 14"><path d="M5,0.5 L9.5,5 H0.5 Z M0.5,8 H9.5 L5,12.5 Z" fill="#999"/></svg></div>
<div class="h" style="left:371px;top:164px">合同编号<svg class="sort" viewBox="0 0 10 14"><path d="M5,0.5 L9.5,5 H0.5 Z M0.5,8 H9.5 L5,12.5 Z" fill="#999"/></svg></div>
<div class="h" style="left:571px;top:164px">项目名称<svg class="sort" viewBox="0 0 10 14"><path d="M5,0.5 L9.5,5 H0.5 Z M0.5,8 H9.5 L5,12.5 Z" fill="#999"/></svg></div>
<div class="h" style="left:871px;top:164px">施工单位<svg class="sort" viewBox="0 0 10 14"><path d="M5,0.5 L9.5,5 H0.5 Z M0.5,8 H9.5 L5,12.5 Z" fill="#999"/></svg></div>
<div class="h" style="left:1071px;top:164px">劳务分包单位<svg class="sort" viewBox="0 0 10 14"><path d="M5,0.5 L9.5,5 H0.5 Z M0.5,8 H9.5 L5,12.5 Z" fill="#999"/></svg></div>
<div class="h" style="left:1271px;top:164px">合同金额<svg class="sort" viewBox="0 0 10 14"><path d="M5,0.5 L9.5,5 H0.5 Z M0.5,8 H9.5 L5,12.5 Z" fill="#999"/></svg></div>
<div class="h" style="left:1371px;top:164px">已完成工程量<svg class="sort" viewBox="0 0 10 14"><path d="M5,0.5 L9.5,5 H0.5 Z M0.5,8 H9.5 L5,12.5 Z" fill="#999"/></svg></div>
<div class="h" style="left:1471px;top:164px">本次付款金额<svg class="sort" viewBox="0 0 10 14"><path d="M5,0.5 L9.5,5 H0.5 Z M0.5,8 H9.5 L5,12.5 Z" fill="#999"/></svg></div>
<div class="h" style="left:1571px;top:164px">累计支付金额<svg class="sort" viewBox="0 0 10 14"><path d="M5,0.5 L9.5,5 H0.5 Z M0.5,8 H9.5 L5,12.5 Z" fill="#999"/></svg></div>
<div class="h" style="left:1671px;top:164px">含本次累计支付金额<svg class="sort" viewBox="0 0 10 14"><path d="M5,0.5 L9.5,5 H0.5 Z M0.5,8 H9.5 L5,12.5 Z" fill="#999"/></svg></div>
<div class="h" style="left:1821px;top:164px">剩余金额<svg class="sort" viewBox="0 0 10 14"><path d="M5,0.5 L9.5,5 H0.5 Z M0.5,8 H9.5 L5,12.5 Z" fill="#999"/></svg></div>
<div class="tr" style="top:199px;">
<div class="cb" style="top:9px"></div>
<div class="c" style="left:41px;"><span class="l">2017</span>年<span class="l">11</span>月<span class="l">07</span>日</div>
<div class="c" style="left:171px;"><span class="l">HK-LW-TX-2017-017</span></div>
<div class="c" style="left:371px;top:1px;">藤县<span class="l">35KV</span>吉中东线<span class="l">17#</span>至<span class="l">19#</span>杆整改工程</div>
<div class="c" style="left:671px;top:1px;">广西宏湖水利电业科技发展...</div>
<div class="c" style="left:871px;top:1px;">凌云县万兴水电开发有限公司</div>
<div class="c" style="left:1071px;"><span class="n">10598.00</span></div>
</div>
<div class="tr" style="top:235px;">
<div class="cb" style="top:9px"></div>
<div class="c" style="left:41px;"><span class="l">2017</span>年<span class="l">11</span>月<span class="l">07</span>日</div>
<div class="c" style="left:171px;"><span class="l">HK-LW-F-2017-010</span></div>
<div class="c" style="left:371px;top:1px;">世界寿源城<span class="l">-</span>三门海养生文化村专变配电工程</div>
<div class="c" style="left:671px;top:1px;">广西宏湖水利电业科技发展...</div>
<div class="c" style="left:871px;top:1px;">凌云县万兴水电开发有限公司</div>
<div class="c" style="left:1071px;"><span class="n">197000.00</span></div>
<div class="c" style="left:1171px;"><span class="n">70.00</span></div>
<div class="c" style="left:1271px;"><span class="n">197000.00</span></div>
<div class="c" style="left:1371px;"><span class="n">0.00</span></div>
<div class="c" style="left:1621px;"><span class="n">0.00</span></div>
</div>
<div class="tr" style="top:271px;">
<div class="cb" style="top:9px"></div>
<div class="c" style="left:41px;"><span class="l">2017</span>年<span class="l">11</span>月<span class="l">07</span>日</div>
<div class="c" style="left:171px;"><span class="l">HK-LW-TX-2017-018</span></div>
<div class="c" style="left:371px;top:1px;">藤县象棋金顺石场专变安装工程</div>
<div class="c" style="left:671px;top:1px;">广西宏湖水利电业科技发展...</div>
<div class="c" style="left:871px;top:1px;">凌云县万兴水电开发有限公司</div>
<div class="c" style="left:1071px;"><span class="n">59373.00</span></div>
</div>
<div class="tr" style="top:307px;">
<div class="cb" style="top:9px"></div>
<div class="c" style="left:41px;"><span class="l">2017</span>年<span class="l">11</span>月<span class="l">07</span>日</div>
<div class="c" style="left:171px;"><span class="l">HK-LW-LS-2017-010</span></div>
<div class="c" style="left:371px;top:1px;">龙胜县乐江乡独镜村新增台区<span class="l">2</span>工程施工劳务<span class="l">...</span></div>
<div class="c" style="left:671px;top:1px;">广西宏湖水利电业科技发展...</div>
<div class="c" style="left:871px;top:1px;">凌云县万兴水电开发有限公司</div>
<div class="c" style="left:1071px;"><span class="n">52639.28</span></div>
<div class="c" style="left:1171px;"><span class="n">100.00</span></div>
<div class="c" style="left:1271px;"><span class="n">52639.28</span></div>
<div class="c" style="left:1371px;"><span class="n">0.00</span></div>
<div class="c" style="left:1621px;"><span class="n">0.00</span></div>
</div>
<div class="tr" style="top:343px;">
<div class="cb" style="top:9px"></div>
<div class="c" style="left:41px;"><span class="l">2017</span>年<span class="l">11</span>月<span class="l">07</span>日</div>
<div class="c" style="left:171px;"><span class="l">HK-LW-FS-2017-004</span></div>
<div class="c" style="left:371px;top:1px;"><span class="l">2016</span>年第一批农村电网改造升级工程（凤山<span class="l">...</span></div>
<div class="c" style="left:671px;top:1px;">广西宏湖水利电业科技发展...</div>
<div class="c" style="left:871px;top:1px;">凌云县万兴水电开发有限公司</div>
<div class="c" style="left:1071px;"><span class="n">156000.00</span></div>
<div class="c" style="left:1171px;"><span class="n">100.00</span></div>
<div class="c" style="left:1271px;"><span class="n">156000.00</span></div>
<div class="c" style="left:1371px;"><span class="n">0.00</span></div>
<div class="c" style="left:1621px;"><span class="n">0.00</span></div>
</div>
<div class="tr" style="top:379px;">
<div class="cb" style="top:9px"></div>
<div class="c" style="left:41px;"><span class="l">2017</span>年<span class="l">11</span>月<span class="l">07</span>日</div>
<div class="c" style="left:171px;"><span class="l">HK-LW-NM-2017-023</span></div>
<div class="c" style="left:371px;top:1px;">桐棉所那梨公变<span class="l">1#</span>低压隐患整改工程</div>
<div class="c" style="left:671px;top:1px;">广西宏湖水利电业科技发展...</div>
<div class="c" style="left:871px;top:1px;">凌云县万兴水电开发有限公司</div>
<div class="c" style="left:1071px;"><span class="n">7500.00</span></div>
<div class="c" style="left:1171px;"><span class="n">100.00</span></div>
<div class="c" style="left:1271px;"><span class="n">7500.00</span></div>
<div class="c" style="left:1621px;"><span class="n">0.00</span></div>
</div>
<div class="tr" style="top:415px;">
<div class="cb" style="top:9px"></div>
<div class="c" style="left:41px;"><span class="l">2017</span>年<span class="l">11</span>月<span class="l">07</span>日</div>
<div class="c" style="left:171px;"><span class="l">HK-LW-TX-2017-038</span></div>
<div class="c" style="left:371px;top:1px;">广西藤县永丰化工制品有限公司<span class="l">35kv</span>电缆更<span class="l">...</span></div>
<div class="c" style="left:671px;top:1px;">广西宏湖水利电业科技发展...</div>
<div class="c" style="left:871px;top:1px;">凌云县万兴水电开发有限公司</div>
<div class="c" style="left:1071px;"><span class="n">16951.00</span></div>
<div class="c" style="left:1171px;"><span class="n">100.00</span></div>
<div class="c" style="left:1271px;"><span class="n">16951.00</span></div>
</div>
<div class="tr" style="top:451px;">
<div class="cb" style="top:9px"></div>
<div class="c" style="left:41px;"><span class="l">2017</span>年<span class="l">11</span>月<span class="l">07</span>日</div>
<div class="c" style="left:171px;"><span class="l">HK-LW-NM-2017-018</span></div>
<div class="c" style="left:371px;top:1px;">城西变工业园<span class="l">902</span>、<span class="l">903</span>线、泰和新城<span class="l">907</span>线<span class="l">...</span></div>
<div class="c" style="left:671px;top:1px;">广西宏湖水利电业科技发展...</div>
<div class="c" style="left:871px;top:1px;">凌云县万兴水电开发有限公司</div>
<div class="c" style="left:1071px;"><span class="n">2300.00</span></div>
<div class="c" style="left:1171px;"><span class="n">100.00</span></div>
<div class="c" style="left:1271px;"><span class="n">2300.00</span></div>
<div class="c" style="left:1371px;"><span class="n">0.00</span></div>
<div class="c" style="left:1621px;"><span class="n">0.00</span></div>
</div>
<div class="tr" style="top:487px;background:#f9f9f9;">
<div class="cb" style="top:9px"></div>
<div class="c" style="left:41px;"><span class="l">2017</span>年<span class="l">11</span>月<span class="l">07</span>日</div>
<div class="c" style="left:171px;"><span class="l">HK-LW-LS-2017-002</span></div>
<div class="c" style="left:371px;top:1px;">龙胜各族自治县龙胜镇玉兰台区低压改造工程</div>
<div class="c" style="left:671px;top:1px;">广西宏湖水利电业科技发展...</div>
<div class="c" style="left:871px;top:1px;">凌云县万兴水电开发有限公司</div>
<div class="c" style="left:1071px;"><span class="n">21500.00</span></div>
<div class="c" style="left:1171px;"><span class="n">100.00</span></div>
<div class="c" style="left:1271px;"><span class="n">21500.00</span></div>
<div class="c" style="left:1371px;"><span class="n">0.00</span></div>
<div class="c" style="left:1621px;"><span class="n">0.00</span></div>
</div>
<div class="tr" style="top:523px;">
<div class="cb" style="top:9px"></div>
<div class="c" style="left:41px;"><span class="l">2017</span>年<span class="l">11</span>月<span class="l">06</span>日</div>
<div class="c" style="left:171px;"><span class="l">HK-LW-ZY-2017-008</span></div>
<div class="c" style="left:371px;top:1px;">资源县梅溪镇胡家田垃圾处理场<span class="l">50KVA</span>专变<span class="l">...</span></div>
<div class="c" style="left:671px;top:1px;">广西宏湖水利电业科技发展...</div>
<div class="c" style="left:871px;top:1px;">凌云县万兴水电开发有限公司</div>
<div class="c" style="left:1071px;"><span class="n">34737.76</span></div>
<div class="c" style="left:1171px;"><span class="n">100.00</span></div>
<div class="c" style="left:1271px;"><span class="n">34737.76</span></div>
</div>
<div class="tr" style="top:559px;">
<div class="cb" style="top:9px"></div>
<div class="c" style="left:41px;"><span class="l">2017</span>年<span class="l">11</span>月<span class="l">06</span>日</div>
<div class="c" style="left:171px;"><span class="l">HK-LW-LS-2017-004</span></div>
<div class="c" style="left:371px;top:1px;">龙胜龙骏公交有限公司龙胜汽车总站专变工程</div>
<div class="c" style="left:671px;top:1px;">广西宏湖水利电业科技发展...</div>
<div class="c" style="left:871px;top:1px;">凌云县万兴水电开发有限公司</div>
<div class="c" style="left:1071px;"><span class="n">25000.00</span></div>
<div class="c" style="left:1171px;"><span class="n">100.00</span></div>
<div class="c" style="left:1271px;"><span class="n">25000.00</span></div>
<div class="c" style="left:1371px;"><span class="n">0.00</span></div>
<div class="c" style="left:1621px;"><span class="n">0.00</span></div>
</div>
<div class="tr" style="top:595px;">
<div class="cb" style="top:9px"></div>
<div class="c" style="left:41px;"><span class="l">2017</span>年<span class="l">11</span>月<span class="l">02</span>日</div>
<div class="c" style="left:171px;"><span class="l">HK-LW-ND-2017-017</span></div>
<div class="c" style="left:371px;top:1px;">南丹县水利电业有限公司四七八箱变迁移工程</div>
<div class="c" style="left:671px;top:1px;">广西宏湖水利电业科技发展...</div>
<div class="c" style="left:871px;top:1px;">凌云县万兴水电开发有限公司</div>
<div class="c" style="left:1071px;"><span class="n">8400.00</span></div>
<div class="c" style="left:1271px;"><span class="n">8400.00</span></div>
<div class="c" style="left:1621px;"><span class="n">0.00</span></div>
</div>
<div class="tr" style="top:631px;">
<div class="cb" style="top:9px"></div>
<div class="c" style="left:41px;"><span class="l">2017</span>年<span class="l">11</span>月<span class="l">02</span>日</div>
<div class="c" style="left:171px;"><span class="l">HD-LW- LZ-2017-006</span></div>
<div class="c" style="left:371px;top:1px;">龙州县武德乡科甲新村、水口镇共宜新区、<span class="l">...</span></div>
<div class="c" style="left:671px;top:1px;">广西能建宏湖电力工程有限...</div>
<div class="c" style="left:871px;top:1px;">凌云县万兴水电开发有限公司</div>
<div class="c" style="left:1071px;"><span class="n">3169607.00</span></div>
<div class="c" style="left:1171px;"><span class="n">10.00</span></div>
<div class="c" style="left:1271px;"><span class="n">250000.00</span></div>
</div>
<div class="tr" style="top:667px;">
<div class="cb" style="top:9px"></div>
<div class="c" style="left:41px;"><span class="l">2017</span>年<span class="l">11</span>月<span class="l">02</span>日</div>
<div class="c" style="left:171px;"><span class="l">HD-LW-NM-2017-033</span></div>
<div class="c" style="left:371px;top:1px;">农网仓库道路碎石垫层工程</div>
<div class="c" style="left:671px;top:1px;">广西能建宏湖电力工程有限...</div>
<div class="c" style="left:871px;top:1px;">凌云县万兴水电开发有限公司</div>
<div class="c" style="left:1071px;"><span class="n">103000.00</span></div>
<div class="c" style="left:1171px;"><span class="n">100.00</span></div>
<div class="c" style="left:1271px;"><span class="n">103000.00</span></div>
<div class="c" style="left:1621px;"><span class="n">103000.00</span></div>
</div>
<div class="tr" style="top:703px;">
<div class="cb" style="top:9px"></div>
<div class="c" style="left:41px;"><span class="l">2017</span>年<span class="l">11</span>月<span class="l">02</span>日</div>
<div class="c" style="left:171px;"><span class="l">HK-LW-CZ-2017-005</span></div>
<div class="c" style="left:371px;top:1px;">崇左市丰益酒精厂<span class="l">35KV</span>专用线路改造工程公<span class="l">...</span></div>
<div class="c" style="left:671px;top:1px;">广西宏湖水利电业科技发展...</div>
<div class="c" style="left:871px;top:1px;">凌云县万兴水电开发有限公司</div>
<div class="c" style="left:1071px;"><span class="n">100000.00</span></div>
<div class="c" style="left:1171px;"><span class="n">100.00</span></div>
<div class="c" style="left:1271px;"><span class="n">50000.00</span></div>
<div class="c" style="left:1371px;"><span class="n">50000.00</span></div>
<div class="c" style="left:1621px;"><span class="n">50000.00</span></div>
</div>
<div class="tr" style="top:739px;">
<div class="cb" style="top:9px"></div>
<div class="c" style="left:41px;"><span class="l">2017</span>年<span class="l">11</span>月<span class="l">01</span>日</div>
<div class="c" style="left:171px;"><span class="l">HK-LW-BB-2017-002</span></div>
<div class="c" style="left:371px;top:1px;">博白县绿洲一品小区一户一表配电设施安装<span class="l">...</span></div>
<div class="c" style="left:671px;top:1px;">广西宏湖水利电业科技发展...</div>
<div class="c" style="left:871px;top:1px;">凌云县万兴水电开发有限公司</div>
<div class="c" style="left:1071px;"><span class="n">362413.46</span></div>
<div class="c" style="left:1171px;"><span class="n">100.00</span></div>
<div class="c" style="left:1271px;"><span class="n">362413.46</span></div>
</div>
<div class="tr" style="top:775px;">
<div class="cb" style="top:9px"></div>
<div class="c" style="left:41px;"><span class="l">2017</span>年<span class="l">11</span>月<span class="l">01</span>日</div>
<div class="c" style="left:171px;"><span class="l">HK-LW-ZS-2017-028</span></div>
<div class="c" style="left:371px;top:1px;">钟山县木耳基地低压线路安装工程合同</div>
<div class="c" style="left:671px;top:1px;">广西宏湖水利电业科技发展...</div>
<div class="c" style="left:871px;top:1px;">凌云县万兴水电开发有限公司</div>
<div class="c" style="left:1071px;"><span class="n">559640.18</span></div>
<div class="c" style="left:1271px;"><span class="n">300000.00</span></div>
<div class="c" style="left:1621px;"><span class="n">259640.18</span></div>
</div>
<div class="tr" style="top:811px;border-bottom:none;">
<div class="cb" style="top:9px"></div>
<div class="c" style="left:41px;"><span class="l">2017</span>年<span class="l">11</span>月<span class="l">01</span>日</div>
<div class="c" style="left:171px;"><span class="l">HK-LW-ZS-2017-002</span></div>
<div class="c" style="left:371px;top:1px;">钟山县木耳棒制棒厂配套电力设施建设项目<span class="l">...</span></div>
<div class="c" style="left:671px;top:1px;">广西宏湖水利电业科技发展...</div>
<div class="c" style="left:871px;top:1px;">凌云县万兴水电开发有限公司</div>
<div class="c" style="left:1071px;"><span class="n">1279872.35</span></div>
<div class="c" style="left:1271px;"><span class="n">879872.35</span></div>
<div class="c" style="left:1371px;"><span class="n">400000.00</span></div>
<div class="c" style="left:1621px;"><span class="n">0.00</span></div>
</div>
<div class="abs" style="left:200px;top:857px;width:1626px;height:6px;background:#d6d6d6;border-radius:3px"></div>
<div class="abs" style="left:1276px;top:888px;line-height:20px;font-size:12px;color:#333;white-space:nowrap">共10868条, 每页显示:</div>
<div class="abs" style="left:1405px;top:883px;width:30px;height:26px;border:1px solid #ddd;border-radius:2px;text-align:center;line-height:26px;font-size:15px;color:#333">50</div>
<div class="abs" style="left:1438px;top:888px;line-height:20px;font-size:12px;color:#333">条</div>
<div class="abs" style="left:1461px;top:883px;width:377px;height:27px;border:1px solid #ddd;border-radius:3px;background:#fff"></div>
<div class="pgt" style="left:1461px;width:24px;font-size:10px;letter-spacing:-1px;line-height:26px;">&lt;&lt;</div>
<div class="abs" style="left:1485px;top:884px;width:1px;height:25px;background:#ddd"></div>
<div class="pgt" style="left:1485px;width:24px;font-size:10px;line-height:26px;">&lt;</div>
<div class="abs" style="left:1509px;top:884px;width:1px;height:25px;background:#ddd"></div>
<div class="pgt" style="left:1509px;width:24px;">1</div>
<div class="abs" style="left:1533px;top:884px;width:1px;height:25px;background:#ddd"></div>
<div class="pgt" style="left:1533px;width:26px;">...</div>
<div class="abs" style="left:1559px;top:884px;width:1px;height:25px;background:#ddd"></div>
<div class="pgt" style="left:1559px;width:38px;">213</div>
<div class="abs" style="left:1597px;top:884px;width:1px;height:25px;background:#ddd"></div>
<div class="pgt" style="left:1597px;width:38px;">214</div>
<div class="abs" style="left:1635px;top:884px;width:1px;height:25px;background:#ddd"></div>
<div class="pgt" style="left:1635px;width:39px;">215</div>
<div class="abs" style="left:1674px;top:883px;width:39px;height:27px;background:#00b0ef"></div>
<div class="pgt" style="left:1674px;width:39px;color:#fff">216</div>
<div class="pgt" style="left:1713px;width:37px;">217</div>
<div class="abs" style="left:1750px;top:884px;width:1px;height:25px;background:#ddd"></div>
<div class="pgt" style="left:1750px;width:40px;">218</div>
<div class="abs" style="left:1790px;top:884px;width:1px;height:25px;background:#ddd"></div>
<div class="pgt" style="left:1790px;width:23px;font-size:10px;line-height:26px;">&gt;</div>
<div class="abs" style="left:1813px;top:884px;width:1px;height:25px;background:#ddd"></div>
<div class="pgt" style="left:1813px;width:25px;font-size:10px;letter-spacing:-1px;line-height:26px;">&gt;&gt;</div>
<div class="abs" style="left:1848px;top:883px;width:30px;height:26px;border:1px solid #ddd;border-radius:2px;line-height:26px;font-size:16px;color:#333;text-align:left;padding-left:2px;overflow:hidden;white-space:nowrap">216</div>
<div class="abs" style="left:1881px;top:885px;width:29px;height:25px;border:1px solid #ddd;border-radius:2px;background:#f0f0f0;line-height:23px;font-size:13px;color:#bbb;text-align:center">GO</div>
</body></html>
